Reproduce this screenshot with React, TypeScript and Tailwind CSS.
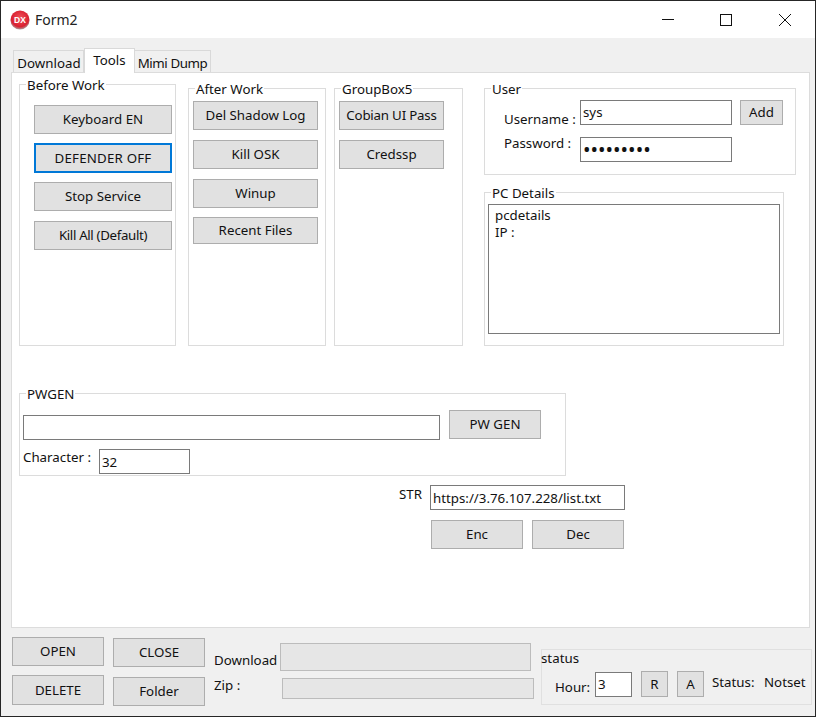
import React from "react";

function Btn({ label, className = "", focused = false }: { label: string; className?: string; focused?: boolean }) {
  return (
    <button className={`flex items-center justify-center whitespace-nowrap bg-[#e1e1e1] pb-px text-[#111] ${focused ? "border-2 border-[#0078d7]" : "border border-[#adadad]"} ${className}`}>
      {label}
    </button>
  );
}

function Field({ value, className = "", type = "text" }: { value: string; className?: string; type?: string }) {
  return (
    <input
      readOnly
      type={type}
      value={value}
      className={`h-[25px] border border-[#7a7a7a] bg-white px-[2px] text-[#111] outline-none ${className}`}
    />
  );
}

function Group({ title, className = "", children }: { title: string; className?: string; children?: React.ReactNode }) {
  return (
    <div className={`flex flex-col border border-[#dcdcdc] ${className}`}>
      <div className="-mt-[9px] ml-[6px] h-[18px] w-fit bg-white px-px leading-[18px] text-[#111]">{title}</div>
      {children}
    </div>
  );
}

function Logo() {
  return (
    <svg width="20" height="20" viewBox="0 0 20 20" className="shrink-0">
      <defs>
        <radialGradient id="lg" cx="50%" cy="40%" r="60%">
          <stop offset="0%" stopColor="#f0545c" />
          <stop offset="75%" stopColor="#d92030" />
          <stop offset="100%" stopColor="#a8a0a0" />
        </radialGradient>
      </defs>
      <circle cx="10" cy="10" r="9.6" fill="url(#lg)" />
      <text x="10" y="13" textAnchor="middle" fontSize="8.5" fontWeight="700" fill="#fff" fontFamily="Liberation Sans, sans-serif">DX</text>
    </svg>
  );
}

export default function App() {
  return (
    <div className="flex h-[717px] w-[816px] flex-col overflow-hidden border border-[#262626] bg-[#f0f0f0] font-['Noto_Sans',sans-serif] text-[13.3px] leading-[18px] text-[#111]">
      {/* Title bar */}
      <div className="flex h-[37px] shrink-0 items-center bg-white pl-[9px]">
        <Logo />
        <span className="ml-[5px] text-[14px] text-[#222]">Form2</span>
        <div className="ml-auto flex items-center">
          <svg width="14" height="14" viewBox="0 0 14 14" className="mr-[44px]" stroke="#111" fill="none"><path d="M1 6.5H13" /></svg>
          <svg width="14" height="14" viewBox="0 0 14 14" className="mr-[45px]" stroke="#111" fill="none"><rect x="1.5" y="1.5" width="11" height="11" /></svg>
          <svg width="14" height="14" viewBox="0 0 14 14" className="mr-[23px]" stroke="#111" fill="none"><path d="M1 1L13 13M13 1L1 13" /></svg>
        </div>
      </div>

      {/* Tabs */}
      <div className="relative z-10 ml-[12px] mt-[10px] flex h-[24px] shrink-0 items-end whitespace-nowrap">
        <div className="flex h-[22px] w-[71px] items-center justify-center border border-b-0 border-[#d9d9d9] bg-[#f0f0f0] pl-px pt-[2px]">Download</div>
        <div className="-mb-px flex h-[25px] w-[51px] items-center justify-center border border-b-0 border-[#d9d9d9] bg-white pb-[2px]">Tools</div>
        <div className="flex h-[22px] w-[76px] items-center justify-center border border-b-0 border-l-0 border-[#d9d9d9] bg-[#f0f0f0] pt-[2px] tracking-[-0.4px]">Mimi Dump</div>
      </div>

      {/* Tab panel */}
      <div className="ml-[10px] flex h-[556px] w-[799px] shrink-0 flex-col border border-[#dcdcdc] bg-white">
        <div className="ml-[7px] flex items-start">
          <Group title="Before Work" className="mt-[11px] h-[262px] w-[157px]">
            <div className="ml-[14px] mt-[11px] flex flex-col">
              <Btn label="Keyboard EN" className="h-[29px] w-[138px]" />
              <Btn label="DEFENDER OFF" focused className="mt-[9px] h-[30px] w-[138px] tracking-[0.2px]" />
              <Btn label="Stop Service" className="mt-[9px] h-[29px] w-[138px]" />
              <Btn label="Kill All (Default)" className="mt-[10px] h-[29px] w-[138px] tracking-[-0.35px]" />
            </div>
          </Group>
          <Group title="After Work" className="ml-[12px] mt-[15px] h-[258px] w-[138px]">
            <div className="ml-[4px] mt-[3px] flex flex-col">
              <Btn label="Del Shadow Log" className="h-[29px] w-[125px]" />
              <Btn label="Kill OSK" className="mt-[10px] h-[29px] w-[125px]" />
              <Btn label="Winup" className="mt-[10px] h-[29px] w-[125px]" />
              <Btn label="Recent Files" className="mt-[9px] h-[27px] w-[125px]" />
            </div>
          </Group>
          <Group title="GroupBox5" className="ml-[8px] mt-[15px] h-[258px] w-[129px]">
            <div className="ml-[4px] mt-[3px] flex flex-col">
              <Btn label="Cobian UI Pass" className="h-[29px] w-[105px] tracking-[-0.2px]" />
              <Btn label="Credssp" className="mt-[10px] h-[29px] w-[105px]" />
            </div>
          </Group>
          <div className="ml-[21px] mt-[15px] flex flex-col">
            <Group title="User" className="h-[87px] w-[312px]">
              <div className="mt-[2px] flex items-start">
                <span className="ml-[19px] mt-[10px] w-[76px]">Username :</span>
                <Field value="sys" className="w-[152px] pb-[2px]" />
                <Btn label="Add" className="ml-[8px] h-[25px] w-[43px]" />
              </div>
              <div className="mt-[9px] flex items-start">
                <span className="-mt-[3px] ml-[19px] w-[76px]">Password :</span>
                <Field value="aaaaaaaaa" type="password" className="w-[152px] text-[20px]" />
              </div>
            </Group>
            <Group title="PC Details" className="mt-[17px] h-[154px] w-[300px]">
              <textarea
                readOnly
                value={"pcdetails\nIP :"}
                className="ml-[3px] mt-[2px] h-[130px] w-[292px] resize-none border border-[#7a7a7a] bg-white pl-[6px] pt-[2px] leading-[17px] text-[#111] outline-none"
              />
            </Group>
          </div>
        </div>

        <Group title="PWGEN" className="ml-[7px] mt-[47px] h-[83px] w-[547px]">
          <div className="ml-[3px] mt-[7px] flex items-start">
            <Field value="" className="mt-[5px] w-[417px]" />
            <Btn label="PW GEN" className="ml-[9px] h-[29px] w-[92px]" />
          </div>
          <div className="ml-[3px] mt-[9px] flex items-start">
            <span className="-mt-px w-[76px]">Character :</span>
            <Field value="32" className="w-[91px]" />
          </div>
        </Group>

        <div className="ml-[387px] mt-[9px] flex items-start">
          <span className="w-[31px]">STR</span>
          <Field value="https://3.76.107.228/list.txt" className="w-[195px]" />
        </div>
        <div className="ml-[419px] mt-[10px] flex">
          <Btn label="Enc" className="h-[29px] w-[92px]" />
          <Btn label="Dec" className="ml-[9px] h-[29px] w-[92px]" />
        </div>
      </div>

      {/* Bottom bar */}
      <div className="ml-[11px] flex items-start">
        <div className="mt-[9px] flex flex-col">
          <Btn label="OPEN" className="h-[29px] w-[92px]" />
          <Btn label="DELETE" className="mt-[9px] h-[30px] w-[92px]" />
        </div>
        <div className="ml-[9px] mt-[10px] flex flex-col">
          <Btn label="CLOSE" className="h-[29px] w-[92px]" />
          <Btn label="Folder" className="mt-[10px] h-[29px] w-[92px]" />
        </div>
        <div className="ml-[9px] mt-[15px] flex w-[320px] flex-col">
          <div className="flex items-start">
            <span className="mt-[8px] w-[66px]">Download</span>
            <div className="h-[28px] w-[251px] border border-[#bcbcbc] bg-[#e6e6e6]" />
          </div>
          <div className="mt-[7px] flex items-start">
            <span className="-mt-[2px] w-[68px]">Zip :</span>
            <div className="h-[21px] w-[252px] border border-[#bcbcbc] bg-[#e6e6e6]" />
          </div>
        </div>
        <div className="ml-[7px] mt-[21px] flex h-[56px] w-[271px] flex-col border border-[#e0e0e0]">
          <span className="-ml-px -mt-px">status</span>
          <div className="mt-[4px] flex items-start">
            <span className="ml-[13px] mt-[7px] w-[40px]">Hour:</span>
            <Field value="3" className="mt-px w-[37px] pb-[2px]" />
            <Btn label="R" className="ml-[9px] h-[26px] w-[27px]" />
            <Btn label="A" className="ml-[9px] h-[26px] w-[27px]" />
            <span className="ml-[8px] mt-[2px] w-[52px]">Status:</span>
            <span className="mt-[2px]">Notset</span>
          </div>
        </div>
      </div>
    </div>
  );
}
